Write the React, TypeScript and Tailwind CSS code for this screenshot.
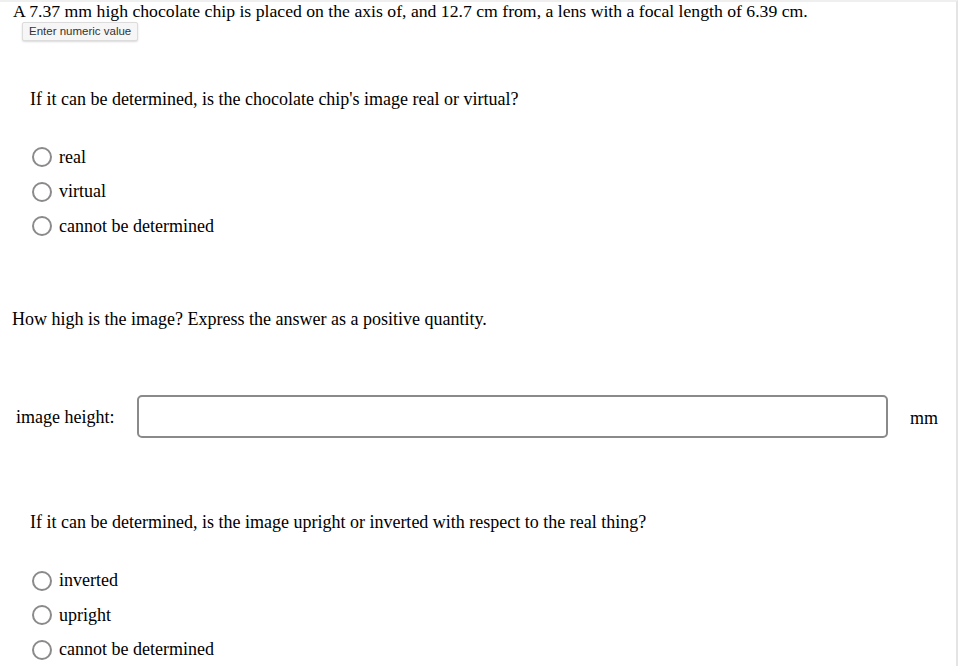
import React from "react";

function Radio({ label }: { label: string }) {
  return (
    <label className="flex items-center gap-[7px] h-[34.5px]">
      <span className="w-[20px] h-[20px] rounded-full border-2 border-[#8a8a8a] bg-white shrink-0" />
      <span>{label}</span>
    </label>
  );
}

function Choice({ question, options, gap }: { question: string; options: string[]; gap: string }) {
  return (
    <div className="pl-[30px]">
      <p className="h-[24px] leading-[24px]">{question}</p>
      <div className={`${gap} pl-[2px] flex flex-col`}>
        {options.map((o) => (
          <Radio key={o} label={o} />
        ))}
      </div>
    </div>
  );
}

export default function App() {
  return (
    <div
      className="w-[958px] h-[666px] overflow-hidden bg-white text-[18px] text-black border-t-2 border-t-[#efefef] border-r-2 border-r-[#e4e4e4]"
      style={{ fontFamily: '"Liberation Serif", "Times New Roman", serif' }}
    >
      <div className="pl-[13px]">
        <p className="leading-[18px] text-[17.7px] whitespace-nowrap">
          A 7.37 mm high chocolate chip is placed on the axis of, and 12.7 cm from, a lens with a focal length of 6.39 cm.
        </p>
        <div
          className="w-fit ml-[9px] mt-[2px] px-[6px] h-[19px] leading-[17px] text-[11.5px] text-[#333] bg-[#f6f6f6] border border-[#dcdcdc] rounded-[2px] shadow-[0_1px_2px_rgba(0,0,0,0.15)]"
          style={{ fontFamily: '"Liberation Sans", Arial, sans-serif' }}
        >
          Enter numeric value
        </div>
      </div>

      <div className="mt-[46px]">
        <Choice
          gap="mt-[29px]"
          question="If it can be determined, is the chocolate chip's image real or virtual?"
          options={["real", "virtual", "cannot be determined"]}
        />
      </div>

      <p className="pl-[12px] mt-[63px] h-[24px] leading-[24px]">
        How high is the image? Express the answer as a positive quantity.
      </p>

      <div className="flex items-center mt-[64px] h-[43px]">
        <span className="pl-[16px] w-[137px] pt-[3px]">image height:</span>
        <div className="w-[751px] h-[43px] rounded-[5px] border-2 border-[#8a8a8a] bg-white" />
        <span className="pl-[22px] pt-[5px]">mm</span>
      </div>

      <div className="mt-[72px]">
        <Choice
          gap="mt-[30px]"
          question="If it can be determined, is the image upright or inverted with respect to the real thing?"
          options={["inverted", "upright", "cannot be determined"]}
        />
      </div>
    </div>
  );
}
